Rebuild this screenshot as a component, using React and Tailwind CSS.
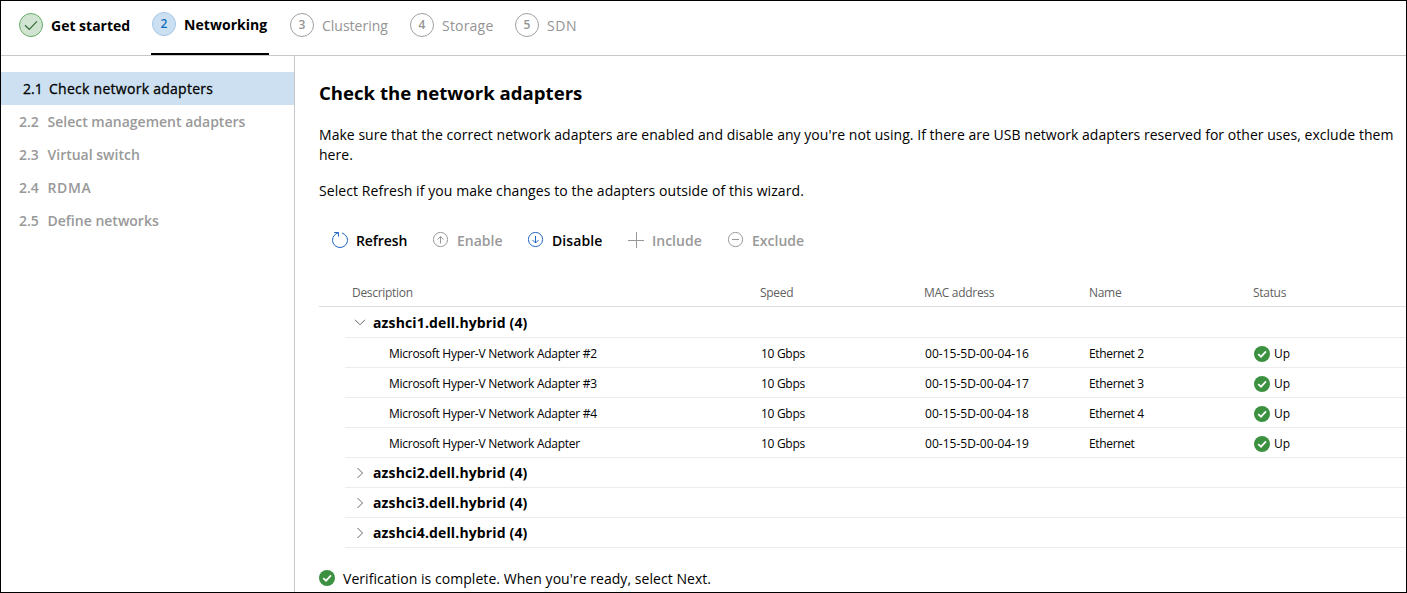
import React from "react";

function CheckBadge() {
  return (
    <svg className="block size-4 shrink-0" viewBox="0 0 16 16" fill="none">
      <circle cx="8" cy="8" r="8" fill="#3c9141" />
      <path d="M4.2 8.2 L7 10.7 L12 5.4" stroke="#fff" strokeWidth="1.7" />
    </svg>
  );
}

function Chevron({ open }) {
  return (
    <svg className="block size-3 shrink-0" viewBox="0 0 12 12" fill="none" stroke="#666" strokeWidth="1">
      {open ? <path d="M1 3.8 L6 8.8 L11 3.8" /> : <path d="M3.5 1 L8.5 6 L3.5 11" />}
    </svg>
  );
}

function ToolIcon({ kind, color }) {
  return (
    <svg className="block size-4 shrink-0" viewBox="0 0 16 16" fill="none" stroke={color} strokeWidth="1">
      {kind === "refresh" && <path d="M2.2 0.5 H6.5 V4.6 M6.3 0.8 C2.8 1.9 0.5 4.6 0.5 8.2 A7.5 7.3 0 0 0 15.5 8.2 C15.5 4.8 13.2 2 10 1.1" />}
      {kind === "up" && <path d="M7.5 11.5 V4.5 M4.5 7.5 L7.5 4.5 L10.5 7.5" />}
      {kind === "down" && <path d="M7.5 4 V11 M4.5 8 L7.5 11 L10.5 8" />}
      {kind === "plus" && <path d="M8.5 0 V16 M0 8.5 H16" />}
      {kind === "minus" && <path d="M4 7.5 H11" />}
      {["up", "down", "minus"].includes(kind) && <circle cx="7.5" cy="7.5" r="7.1" />}
    </svg>
  );
}

const substeps = [
  ["2.2", "Select management adapters", ""],
  ["2.3", "Virtual switch", ""],
  ["2.4", "RDMA", "tracking-[0.6px]"],
  ["2.5", "Define networks", ""],
];

const adapters = [
  ["Microsoft Hyper-V Network Adapter #2", "00-15-5D-00-04-16", "Ethernet 2"],
  ["Microsoft Hyper-V Network Adapter #3", "00-15-5D-00-04-17", "Ethernet 3"],
  ["Microsoft Hyper-V Network Adapter #4", "00-15-5D-00-04-18", "Ethernet 4"],
  ["Microsoft Hyper-V Network Adapter", "00-15-5D-00-04-19", "Ethernet"],
];

const tools = [
  ["refresh", "Refresh", true, "w-[101px]", "tracking-[-0.1px]"],
  ["up", "Enable", false, "w-[95px]", ""],
  ["down", "Disable", true, "w-[100px]", "tracking-[0.1px]"],
  ["plus", "Include", false, "w-[100px]", ""],
  ["minus", "Exclude", false, "w-[100px]", ""],
];

function Step({ number, label, width, tracking }) {
  return (
    <div className={`flex h-[48px] items-center gap-2 text-[#949494] ${width}`}>
      <span className="flex size-6 shrink-0 items-center justify-center rounded-full border border-[#a0a0a0] text-[12px] font-semibold">{number}</span>
      <span className={`text-[14px] ${tracking}`}>{label}</span>
    </div>
  );
}

function Group({ name, open }) {
  return (
    <div className={`ml-[26px] flex items-center border-b border-[#ececec] pl-[9px] ${open ? "h-[31px]" : "h-[30px]"}`}>
      <Chevron open={open} />
      <span className="ml-[7px] text-[14px] font-bold tracking-[0.14px]">{name}</span>
    </div>
  );
}

export default function App() {
  return (
    <div className="flex h-[593px] w-[1407px] flex-col overflow-hidden border border-black bg-white font-['Open_Sans','Noto_Sans',sans-serif] whitespace-nowrap text-black">
      <header className="flex h-[55px] shrink-0 items-start border-b border-[#c8c8c8] pl-[18px]">
        <div className="flex h-[48px] w-[132px] items-center gap-2">
          <svg className="block size-6 shrink-0" viewBox="0 0 24 24" fill="none">
            <circle cx="12" cy="12" r="11.5" fill="#d1e4d2" stroke="#65ac69" />
            <path d="M6 12.3 L10.2 16.3 L18 8.3" stroke="#376b3a" strokeWidth="1.2" />
          </svg>
          <span className="text-[14px] font-bold">Get started</span>
        </div>
        <div className="mr-[21px] flex h-[54px] w-[118px] items-center gap-2 border-b-2 border-black pb-[6px] pl-px">
          <span className="flex size-6 shrink-0 items-center justify-center rounded-full border border-[#a3c6e8] bg-[#cce0f2] text-[12px] font-semibold text-[#106ebe]">2</span>
          <span className="text-[14px] font-bold tracking-[0.05px]">Networking</span>
        </div>
        <Step number="3" label="Clustering" width="w-[120px]" tracking="tracking-[0px]" />
        <Step number="4" label="Storage" width="w-[105px]" tracking="tracking-[0.2px]" />
        <Step number="5" label="SDN" width="w-[100px]" tracking="tracking-[0.6px]" />
      </header>
      <div className="flex min-h-0 flex-1">
        <nav className="w-[294px] shrink-0 border-r border-[#c8c8c8] pt-4 text-[14px] font-semibold">
          <div className="flex h-[33px] items-center bg-[#cce0f2] pl-[22px] font-normal [-webkit-text-stroke:0.3px_#000]">
            <span className="w-[26px]">2.1</span>
            <span className="tracking-[0.27px]">Check network adapters</span>
          </div>
          {substeps.map(([n, label, tracking]) => (
            <div key={n} className="flex h-[33px] items-center pl-[18px] text-[#999]">
              <span className="w-[28.5px]">{n}</span>
              <span className={tracking}>{label}</span>
            </div>
          ))}
        </nav>
        <main className="min-w-0 flex-1 pl-6">
          <h1 className="mt-[24px] text-[18.6px] leading-[26px] font-bold">Check the network adapters</h1>
          <p className="mt-[19px] text-[14px] leading-[20px] tracking-[0.037px]">
            Make sure that the correct network adapters are enabled and disable any you're not using. If there are USB network adapters reserved for other uses, exclude them<br />here.
          </p>
          <p className="mt-4 text-[14px] leading-[20px] tracking-[0.075px]">Select Refresh if you make changes to the adapters outside of this wizard.</p>
          <div className="mt-[23px] flex h-[32px] items-center pl-[13px] text-[14px] font-semibold">
            {tools.map(([kind, label, enabled, width, tracking]) => (
              <div key={kind} className={`flex items-center gap-2 ${width} ${enabled ? "" : "text-[#999]"}`}>
                <ToolIcon kind={kind} color={enabled ? "#2267c5" : "#999"} />
                <span className={tracking}>{label}</span>
              </div>
            ))}
          </div>
          <div className="mt-[25px] flex h-[26px] items-center border-b border-[#dedede] pb-px pl-[33px] text-[12px] tracking-[-0.3px] text-[#5f5f5f]">
            <span className="w-[408px]">Description</span>
            <span className="w-[164px]">Speed</span>
            <span className="w-[165px]">MAC address</span>
            <span className="w-[164px]">Name</span>
            <span>Status</span>
          </div>
          <Group name="azshci1.dell.hybrid (4)" open />
          {adapters.map(([description, mac, name]) => (
            <div key={mac} className="ml-[26px] flex h-[30px] items-center border-b border-[#ececec] pt-[3px] pl-[44px] text-[12px]">
              <span className="w-[372px] tracking-[-0.27px]">{description}</span>
              <span className="w-[164px] tracking-[-0.3px]">10 Gbps</span>
              <span className="w-[164px] tracking-[0.03px]">{mac}</span>
              <span className="w-[165px] tracking-[-0.35px]">{name}</span>
              <span className="flex items-center gap-1"><CheckBadge />Up</span>
            </div>
          ))}
          <Group name="azshci2.dell.hybrid (4)" />
          <Group name="azshci3.dell.hybrid (4)" />
          <Group name="azshci4.dell.hybrid (4)" />
          <div className="mt-[20px] flex h-5 items-center gap-2 text-[14px] tracking-[0.05px]">
            <CheckBadge />
            <span>Verification is complete. When you're ready, select Next.</span>
          </div>
        </main>
      </div>
    </div>
  );
}
